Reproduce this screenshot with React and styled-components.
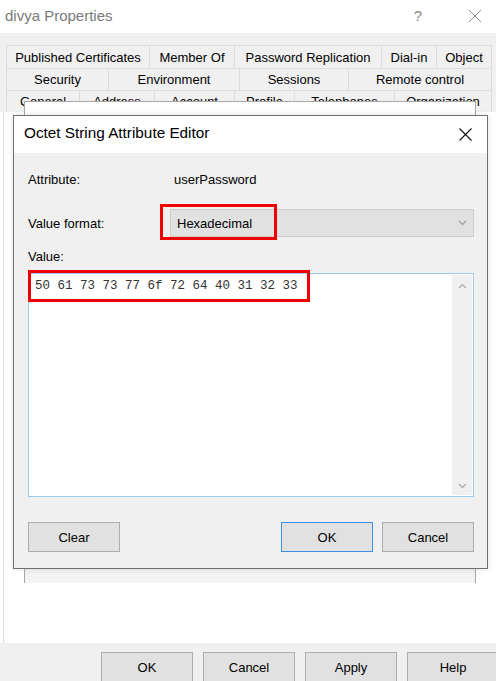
import React from "react";
import styled, { createGlobalStyle } from "styled-components";

const Global = createGlobalStyle`
  html, body { margin: 0; padding: 0; }
  body {
    width: 496px; height: 681px; overflow: hidden;
    font-family: "Liberation Sans", Arial, sans-serif;
    background: #ffffff;
  }
`;

const Window = styled.div`
  position: relative;
  width: 496px;
  height: 681px;
  display: flex;
  flex-direction: column;
  overflow: hidden;
`;

const TitleBar = styled.div`
  height: 33px;
  flex: none;
  display: flex;
  align-items: center;
  padding-left: 5px;
  background: #ffffff;
  color: #7a7a7a;
  font-size: 15px;
`;

const TitleText = styled.div`
  flex: 1;
  margin-top: -3px;
`;

const HelpGlyph = styled.div`
  width: 20px;
  margin-right: 40px;
  margin-top: -3px;
  text-align: center;
  font-size: 15px;
  color: #8a8a8a;
`;

const CloseIcon = styled.svg`
  flex: none;
  margin-right: ${(p) => p.$mr || 0}px;
  margin-top: ${(p) => p.$mt || 0}px;
`;

const TabStrip = styled.div`
  flex: none;
  background: #f0f0f0;
  padding: 12px 4px 0 6px;
  display: flex;
  flex-direction: column;
`;

const TabRow = styled.div`
  display: flex;
  height: ${(p) => p.$h}px;
  border-top: 1px solid #dcdcdc;
  box-sizing: border-box;
`;

const Tab = styled.div`
  flex: none;
  box-sizing: border-box;
  border-right: 1px solid #dcdcdc;
  border-left: ${(p) => (p.$first ? "1px solid #dcdcdc" : "none")};
  display: flex;
  align-items: center;
  justify-content: center;
  font-size: 13px;
  color: #000;
  white-space: nowrap;
  overflow: hidden;
`;

const PageArea = styled.div`
  flex: 1;
  background: #ffffff;
  margin-left: 3px;
  border-left: 1px solid #dcdcdc;
`;

const Footer = styled.div`
  flex: none;
  height: 38px;
  background: #f0f0f0;
  display: flex;
  justify-content: flex-end;
  align-items: flex-start;
  padding-top: 9px;
  gap: 10px;
  box-sizing: border-box;
  margin-right: -3px;
`;

const Button = styled.div`
  flex: none;
  box-sizing: border-box;
  width: ${(p) => p.$w || 92}px;
  height: 30px;
  background: #e1e1e1;
  border: 1px solid ${(p) => (p.$primary ? "#3c8ee0" : "#adadad")};
  display: flex;
  align-items: center;
  justify-content: center;
  font-size: 13px;
  color: #000;
`;

const BehindWindow = styled.div`
  position: absolute;
  left: 24px;
  top: 101px;
  width: 452px;
  height: 482px;
  box-sizing: border-box;
  border: 1px solid #a8a8a8;
  border-bottom: none;
  background: #f3f3f3;
`;

const BehindTitle = styled.div`
  height: 40px;
  background: #ffffff;
`;

const Modal = styled.div`
  position: absolute;
  left: 13px;
  top: 115px;
  width: 475px;
  height: 454px;
  box-sizing: border-box;
  border: 1px solid #6f6f6f;
  background: #f0f0f0;
  display: flex;
  flex-direction: column;
  box-shadow: 0 0 6px rgba(0, 0, 0, 0.12);
`;

const ModalTitle = styled.div`
  height: 37px;
  flex: none;
  background: #ffffff;
  display: flex;
  align-items: center;
  padding-left: 10px;
  font-size: 15.3px;
  color: #000;
`;

const ModalBody = styled.div`
  flex: 1;
  padding: 0 13px 0 14px;
  display: flex;
  flex-direction: column;
`;

const FieldRow = styled.div`
  display: flex;
  align-items: center;
  margin-top: ${(p) => p.$mt}px;
  height: ${(p) => p.$h}px;
  font-size: 13px;
  color: #000;
`;

const Label = styled.div`
  width: ${(p) => p.$w}px;
  flex: none;
`;

const Combo = styled.div`
  position: relative;
  flex: 1;
  height: 28px;
  box-sizing: border-box;
  background: #e1e1e1;
  border: 1px solid #cccccc;
  display: flex;
  align-items: center;
  padding-left: 6px;
  padding-right: 6px;
`;

const ComboText = styled.div`
  flex: 1;
`;

const Highlight = styled.div`
  position: absolute;
  left: ${(p) => p.$l}px;
  top: ${(p) => p.$t}px;
  width: ${(p) => p.$w}px;
  height: ${(p) => p.$h}px;
  box-sizing: border-box;
  border: 3px solid #f00000;
  pointer-events: none;
`;

const TextBox = styled.div`
  position: relative;
  margin-top: 8px;
  height: 224px;
  box-sizing: border-box;
  border: 1px solid #9ccaf0;
  background: #ffffff;
  display: flex;
`;

const HexText = styled.div`
  flex: 1;
  padding: 5px 0 0 6px;
  font-family: "Liberation Mono", "Courier New", monospace;
  font-size: 12.5px;
  color: #333;
  white-space: pre;
`;

const Scrollbar = styled.div`
  width: 20px;
  margin: 1px 1px 1px 0;
  background: #f0f0f0;
  display: flex;
  flex-direction: column;
  justify-content: space-between;
  align-items: center;
  padding: 8px 0 6px;
`;

const ButtonRow = styled.div`
  display: flex;
  margin-top: 25px;
  gap: 9px;
`;

const Spacer = styled.div`
  flex: 1;
`;

const Chevron = ({ up, color = "#a6a6a6" }) => (
  <svg width="9" height="6" viewBox="0 0 9 6">
    <path
      d={up ? "M1 5 L4.5 1.5 L8 5" : "M1 1 L4.5 4.5 L8 1"}
      fill="none"
      stroke={color}
      strokeWidth="1.2"
    />
  </svg>
);

const tabRows = [
  {
    h: 23,
    tabs: [
      ["Published Certificates", 144],
      ["Member Of", 85],
      ["Password Replication", 147],
      ["Dial-in", 55],
      ["Object", 55],
    ],
  },
  {
    h: 22,
    tabs: [
      ["Security", 103],
      ["Environment", 131],
      ["Sessions", 109],
      ["Remote control", 143],
    ],
  },
  {
    h: 22,
    tabs: [
      ["General", 74],
      ["Address", 75],
      ["Account", 80],
      ["Profile", 60],
      ["Telephones", 100],
      ["Organization", 97],
    ],
  },
];

export default function App() {
  return (
    <>
      <Global />
      <Window>
        <TitleBar>
          <TitleText>divya Properties</TitleText>
          <HelpGlyph>?</HelpGlyph>
          <CloseIcon width="14" height="14" viewBox="0 0 14 14" $mr={14} $mt={-2}>
            <path d="M1 1 L13 13 M13 1 L1 13" stroke="#8a8a8a" strokeWidth="1" fill="none" />
          </CloseIcon>
        </TitleBar>
        <TabStrip>
          {tabRows.map((row, i) => (
            <TabRow key={i} $h={row.h}>
              {row.tabs.map(([name, w], j) => (
                <Tab key={name} $first={j === 0} style={{ width: w }}>
                  {name}
                </Tab>
              ))}
            </TabRow>
          ))}
        </TabStrip>
        <PageArea />
        <Footer>
          <Button>OK</Button>
          <Button>Cancel</Button>
          <Button>Apply</Button>
          <Button>Help</Button>
        </Footer>

        <BehindWindow>
          <BehindTitle />
        </BehindWindow>

        <Modal>
          <ModalTitle>
            <TitleText>Octet String Attribute Editor</TitleText>
            <CloseIcon width="13" height="13" viewBox="0 0 13 13" $mr={15}>
              <path d="M0.5 0.5 L12.5 12.5 M12.5 0.5 L0.5 12.5" stroke="#111" strokeWidth="1.1" fill="none" />
            </CloseIcon>
          </ModalTitle>
          <ModalBody>
            <FieldRow $mt={17} $h={18}>
              <Label $w={146}>Attribute:</Label>
              <div>userPassword</div>
            </FieldRow>
            <FieldRow $mt={21} $h={28}>
              <Label $w={142}>Value format:</Label>
              <Combo>
                <ComboText>Hexadecimal</ComboText>
                <Chevron color="#9a9a9a" />
                <Highlight $l={-11} $t={-6} $w={117} $h={36} />
              </Combo>
            </FieldRow>
            <FieldRow $mt={10} $h={18}>
              <Label $w={100}>Value:</Label>
            </FieldRow>
            <TextBox>
              <HexText>50 61 73 73 77 6f 72 64 40 31 32 33</HexText>
              <Scrollbar>
                <Chevron up />
                <Chevron />
              </Scrollbar>
              <Highlight $l={-1} $t={-4} $w={282} $h={32} />
            </TextBox>
            <ButtonRow>
              <Button>Clear</Button>
              <Spacer />
              <Button $primary>OK</Button>
              <Button>Cancel</Button>
            </ButtonRow>
          </ModalBody>
        </Modal>
      </Window>
    </>
  );
}
